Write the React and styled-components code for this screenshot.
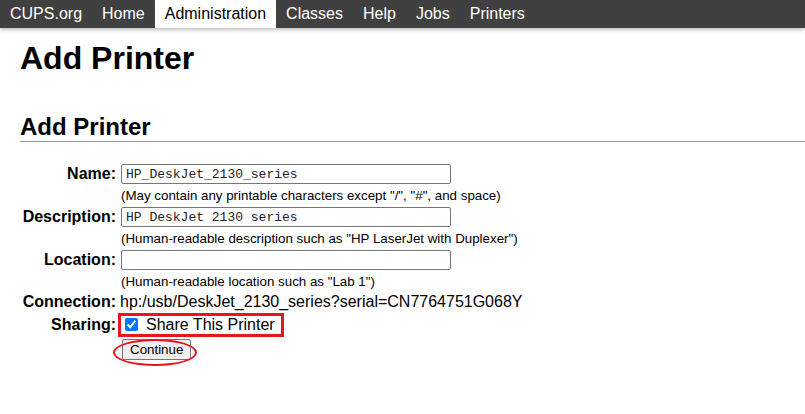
import styled, { createGlobalStyle } from "styled-components";

const GlobalStyle = createGlobalStyle`
  html, body {
    margin: 0;
    padding: 0;
    background: #fff;
  }
  body {
    font-family: "Liberation Sans", Arial, sans-serif;
    font-size: 16px;
    color: #000;
  }
`;

const NavBar = styled.nav`
  display: flex;
  height: 28px;
  background: #404040;
  box-shadow: 0 2px 4px rgba(0, 0, 0, 0.25);
  position: relative;
  z-index: 1;
`;

const NavItem = styled.a`
  display: flex;
  align-items: center;
  padding: 0 10px;
  font-size: 16px;
  line-height: 28px;
  text-decoration: none;
  color: ${(p) => (p.$active ? "#000" : "#fff")};
  background: ${(p) => (p.$active ? "#fff" : "transparent")};
`;

const Content = styled.main`
  padding-left: 20px;
`;

const Title = styled.h1`
  margin: 12px 0 0;
  font-size: 32px;
  line-height: 36px;
  font-weight: bold;
`;

const SectionTitle = styled.h2`
  margin: 37px 0 0;
  font-size: 24px;
  line-height: 28px;
  font-weight: bold;
  border-bottom: 1px solid #999;
`;

const Form = styled.div`
  display: grid;
  grid-template-columns: 96px 1fr;
  column-gap: 4px;
  margin-top: 21px;
`;

const Label = styled.div`
  display: flex;
  align-items: center;
  justify-content: flex-end;
  height: ${(p) => p.$h || 22}px;
  font-weight: bold;
  white-space: nowrap;
`;

const Value = styled.div`
  display: flex;
  align-items: ${(p) => (p.$top ? "flex-start" : "center")};
  padding-top: ${(p) => (p.$top ? 2 : 0)}px;
  box-sizing: border-box;
  height: ${(p) => p.$h || 22}px;
  white-space: nowrap;
`;

const Spacer = styled.div``;

const TextInput = styled.input`
  box-sizing: border-box;
  width: 330px;
  height: 20px;
  margin: 0 0 0 1px;
  padding: 1px 4px;
  border: 1px solid #767676;
  border-radius: 2px;
  font-family: "Liberation Mono", "Courier New", monospace;
  font-size: 13px;
  color: #222;
  background: #fff;
`;

const Hint = styled.div`
  display: flex;
  align-items: center;
  height: 21px;
  padding-left: 1px;
  font-size: 13.33px;
  white-space: nowrap;
`;

const Highlight = styled.label`
  display: inline-flex;
  align-items: center;
  gap: 8px;
  box-sizing: border-box;
  height: 24px;
  margin-left: -2px;
  padding: 0 6px 0 4px;
  border: 3px solid #e8151b;
  font-size: 16px;
`;

const Checkbox = styled.input`
  width: 13px;
  height: 13px;
  margin: 0;
  accent-color: #0075ff;
`;

const ButtonWrap = styled.div`
  position: relative;
  display: inline-block;
  margin-left: 2px;
`;

const Button = styled.button`
  box-sizing: border-box;
  height: 21px;
  padding: 0 7px;
  border: 1px solid #767676;
  border-radius: 2px;
  background: #efefef;
  font-family: "Liberation Sans", Arial, sans-serif;
  font-size: 13.33px;
  color: #000;
`;

const Circle = styled.span`
  position: absolute;
  left: -9px;
  top: 0;
  width: 84px;
  height: 27px;
  box-sizing: border-box;
  border: 2.5px solid #e8151b;
  border-radius: 50%;
  pointer-events: none;
`;

const navItems = [
  "CUPS.org",
  "Home",
  "Administration",
  "Classes",
  "Help",
  "Jobs",
  "Printers",
];

export default function App() {
  return (
    <>
      <GlobalStyle />
      <NavBar>
        {navItems.map((item) => (
          <NavItem key={item} $active={item === "Administration"}>
            {item}
          </NavItem>
        ))}
      </NavBar>
      <Content>
        <Title>Add Printer</Title>
        <SectionTitle>Add Printer</SectionTitle>
        <Form>
          <Label>Name:</Label>
          <Value>
            <TextInput defaultValue="HP_DeskJet_2130_series" />
          </Value>
          <Spacer />
          <Hint>
            (May contain any printable characters except "/", "#", and space)
          </Hint>

          <Label>Description:</Label>
          <Value>
            <TextInput defaultValue="HP DeskJet 2130 series" />
          </Value>
          <Spacer />
          <Hint>
            (Human-readable description such as "HP LaserJet with Duplexer")
          </Hint>

          <Label>Location:</Label>
          <Value>
            <TextInput defaultValue="" />
          </Value>
          <Spacer />
          <Hint>(Human-readable location such as "Lab 1")</Hint>

          <Label $h={20}>Connection:</Label>
          <Value $h={20}>
            hp:/usb/DeskJet_2130_series?serial=CN7764751G068Y
          </Value>

          <Label $h={25}>Sharing:</Label>
          <Value $h={25}>
            <Highlight>
              <Checkbox type="checkbox" defaultChecked />
              Share This Printer
            </Highlight>
          </Value>

          <Spacer />
          <Value $h={30} $top>
            <ButtonWrap>
              <Button>Continue</Button>
              <Circle />
            </ButtonWrap>
          </Value>
        </Form>
      </Content>
    </>
  );
}
